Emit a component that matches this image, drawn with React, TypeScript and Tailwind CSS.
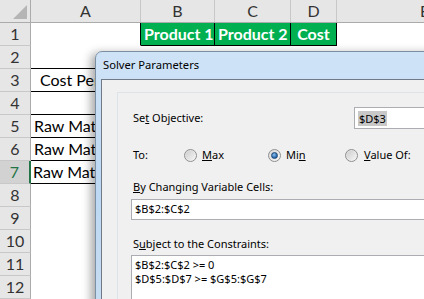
import React from "react";

const colW = [110, 74, 76, 46];

function HeaderRow() {
  const letters = ["A", "B", "C", "D"];
  return (
    <div className="flex h-[23px] bg-[#e6e6e6] border-b border-[#ababab]">
      <div className="relative w-[31px] h-full border-r border-[#ababab] shrink-0">
        <svg className="absolute left-0 top-0" width="31" height="22" viewBox="0 0 31 22">
          <polygon points="27,5 27,19 13,19" fill="#b5b5b5" />
        </svg>
      </div>
      {letters.map((l, i) => (
        <div
          key={l}
          style={{ width: colW[i] }}
          className="shrink-0 h-full border-r border-[#c8c8c8] flex items-center justify-center text-[16px] text-[#333] leading-none"
        >
          {l}
        </div>
      ))}
      <div className="flex-1 h-full flex items-center pl-[83px] text-[16px] text-[#333] leading-none">E</div>
    </div>
  );
}

type CellSpec = {
  text?: string;
  cls?: string;
};

function Row({ n, cells, active }: { n: number; cells: CellSpec[]; active?: boolean }) {
  return (
    <div className="flex h-[23px]">
      <div
        className={
          "w-[31px] h-full shrink-0 flex items-center justify-center text-[16px] leading-none border-b border-[#c8c8c8] " +
          (active
            ? "bg-[#d2d2d2] text-[#217346] border-r-2 border-r-[#217346]"
            : "bg-[#e6e6e6] text-[#333] border-r border-r-[#ababab]")
        }
      >
        {n}
      </div>
      {cells.map((c, i) => (
        <div
          key={i}
          style={{ width: colW[i] }}
          className={"shrink-0 h-full border-r border-b flex items-center text-[16px] leading-none whitespace-nowrap overflow-visible " + (c.cls ?? "border-transparent")}
        >
          {c.text}
        </div>
      ))}
      <div className="flex-1 h-full" />
    </div>
  );
}

function Radio({ checked }: { checked?: boolean }) {
  return (
    <div className="w-[13px] h-[13px] rounded-full border border-[#8e8f8f] bg-gradient-to-br from-[#d9d9d9] to-[#f7f7f7] flex items-center justify-center shrink-0">
      {checked ? (
        <div className="w-[7px] h-[7px] rounded-full bg-[radial-gradient(circle_at_40%_35%,#8fc3f0,#2b6cb0_60%,#1c4f8a)] border border-[#204a76]" />
      ) : (
        <div className="w-[9px] h-[9px] rounded-full bg-gradient-to-br from-[#cfcfcf] to-[#f4f4f4]" />
      )}
    </div>
  );
}

export default function App() {
  const greenCls = "border-black bg-[#00b050] text-white font-bold";
  const blackB = "border-r-transparent border-b-black";
  return (
    <div
      className="relative w-[424px] h-[299px] overflow-hidden bg-white"
      style={{ fontFamily: "Lato, 'Noto Sans', sans-serif" }}
    >
      <HeaderRow />
      <Row
        n={1}
        cells={[
          { cls: "border-r-black border-b-transparent" },
          { text: "Product 1", cls: greenCls + " pl-[3px]" },
          { text: "Product 2", cls: greenCls + " pl-[3px]" },
          { text: "Cost", cls: greenCls + " justify-center" },
        ]}
      />
      <Row n={2} cells={[{ cls: blackB }, {}, {}, {}]} />
      <Row n={3} cells={[{ text: "Cost Per Unit", cls: blackB + " pl-[9px]" }, {}, {}, {}]} />
      <Row n={4} cells={[{ cls: blackB }, {}, {}, {}]} />
      <Row n={5} cells={[{ text: "Raw Material 1", cls: blackB + " pl-[3px]" }, {}, {}, {}]} />
      <Row n={6} cells={[{ text: "Raw Material 2", cls: blackB + " pl-[3px]" }, {}, {}, {}]} />
      <Row n={7} active cells={[{ text: "Raw Material 3", cls: blackB + " pl-[2px]" }, {}, {}, {}]} />
      {[8, 9, 10, 11, 12].map((n) => (
        <Row key={n} n={n} cells={[{}, {}, {}, {}]} />
      ))}

      {/* Dialog */}
      <div
        className="absolute left-[95px] top-[51px] w-[360px] h-[270px] rounded-tl-[7px] border border-[#7c8fa3] bg-gradient-to-b from-[#cfe3f7] via-[#bcd8f3] to-[#c8ddf1] shadow-[-4px_2px_10px_rgba(0,0,0,0.35)]"
        style={{ fontFamily: "'Segoe UI', 'Noto Sans', sans-serif" }}
      >
        <div className="h-[27px] flex items-center pl-[7px] text-[11.2px] text-black">Solver Parameters</div>
        <div className="ml-[5px] h-full bg-[#f0f0f0] border-l border-t border-[#6f7a86]">
          <div className="h-[12px]" />
          <div className="ml-[15px] h-full border-l border-t border-[#dde4e9] pl-[13px] text-[11px] text-black">
            {/* Set objective */}
            <div className="flex items-center h-[22px] mt-[14px]">
              <div className="w-[223px] pl-[2px]">
                Se<span className="underline">t</span> Objective:
              </div>
              <div className="flex-1 h-[22px] bg-white border border-[#abadb3] flex items-center pl-[3px]">
                <span className="bg-[#c8c8c8] leading-[15px] px-[1px]">$D$3</span>
              </div>
            </div>
            {/* To */}
            <div className="flex items-center h-[18px] mt-[17px]">
              <div className="w-[53px] pl-[2px]">To:</div>
              <div className="w-[84px] flex items-center gap-[5px]">
                <Radio />
                <span>
                  <span className="underline">M</span>ax
                </span>
              </div>
              <div className="w-[77px] flex items-center gap-[5px]">
                <Radio checked />
                <span>
                  Mi<span className="underline">n</span>
                </span>
              </div>
              <div className="flex items-center gap-[6px]">
                <Radio />
                <span>
                  <span className="underline">V</span>alue Of:
                </span>
              </div>
            </div>
            {/* By changing */}
            <div className="h-[16px] mt-[15px] flex items-center pl-[2px]">
              <span>
                <span className="underline">B</span>y Changing Variable Cells:
              </span>
            </div>
            <div className="mt-[4px] h-[21px] bg-white border border-[#abadb3] flex items-center pl-[3px]">
              $B$2:$C$2
            </div>
            {/* Constraints */}
            <div className="h-[16px] mt-[16px] flex items-center pl-[2px]">
              <span>
                S<span className="underline">u</span>bject to the Constraints:
              </span>
            </div>
            <div className="mt-[3px] h-[80px] bg-white border border-[#abadb3] pl-[3px] pt-[2px] leading-[14px]">
              <div>$B$2:$C$2 &gt;= 0</div>
              <div>$D$5:$D$7 &gt;= $G$5:$G$7</div>
            </div>
          </div>
        </div>
      </div>
    </div>
  );
}
